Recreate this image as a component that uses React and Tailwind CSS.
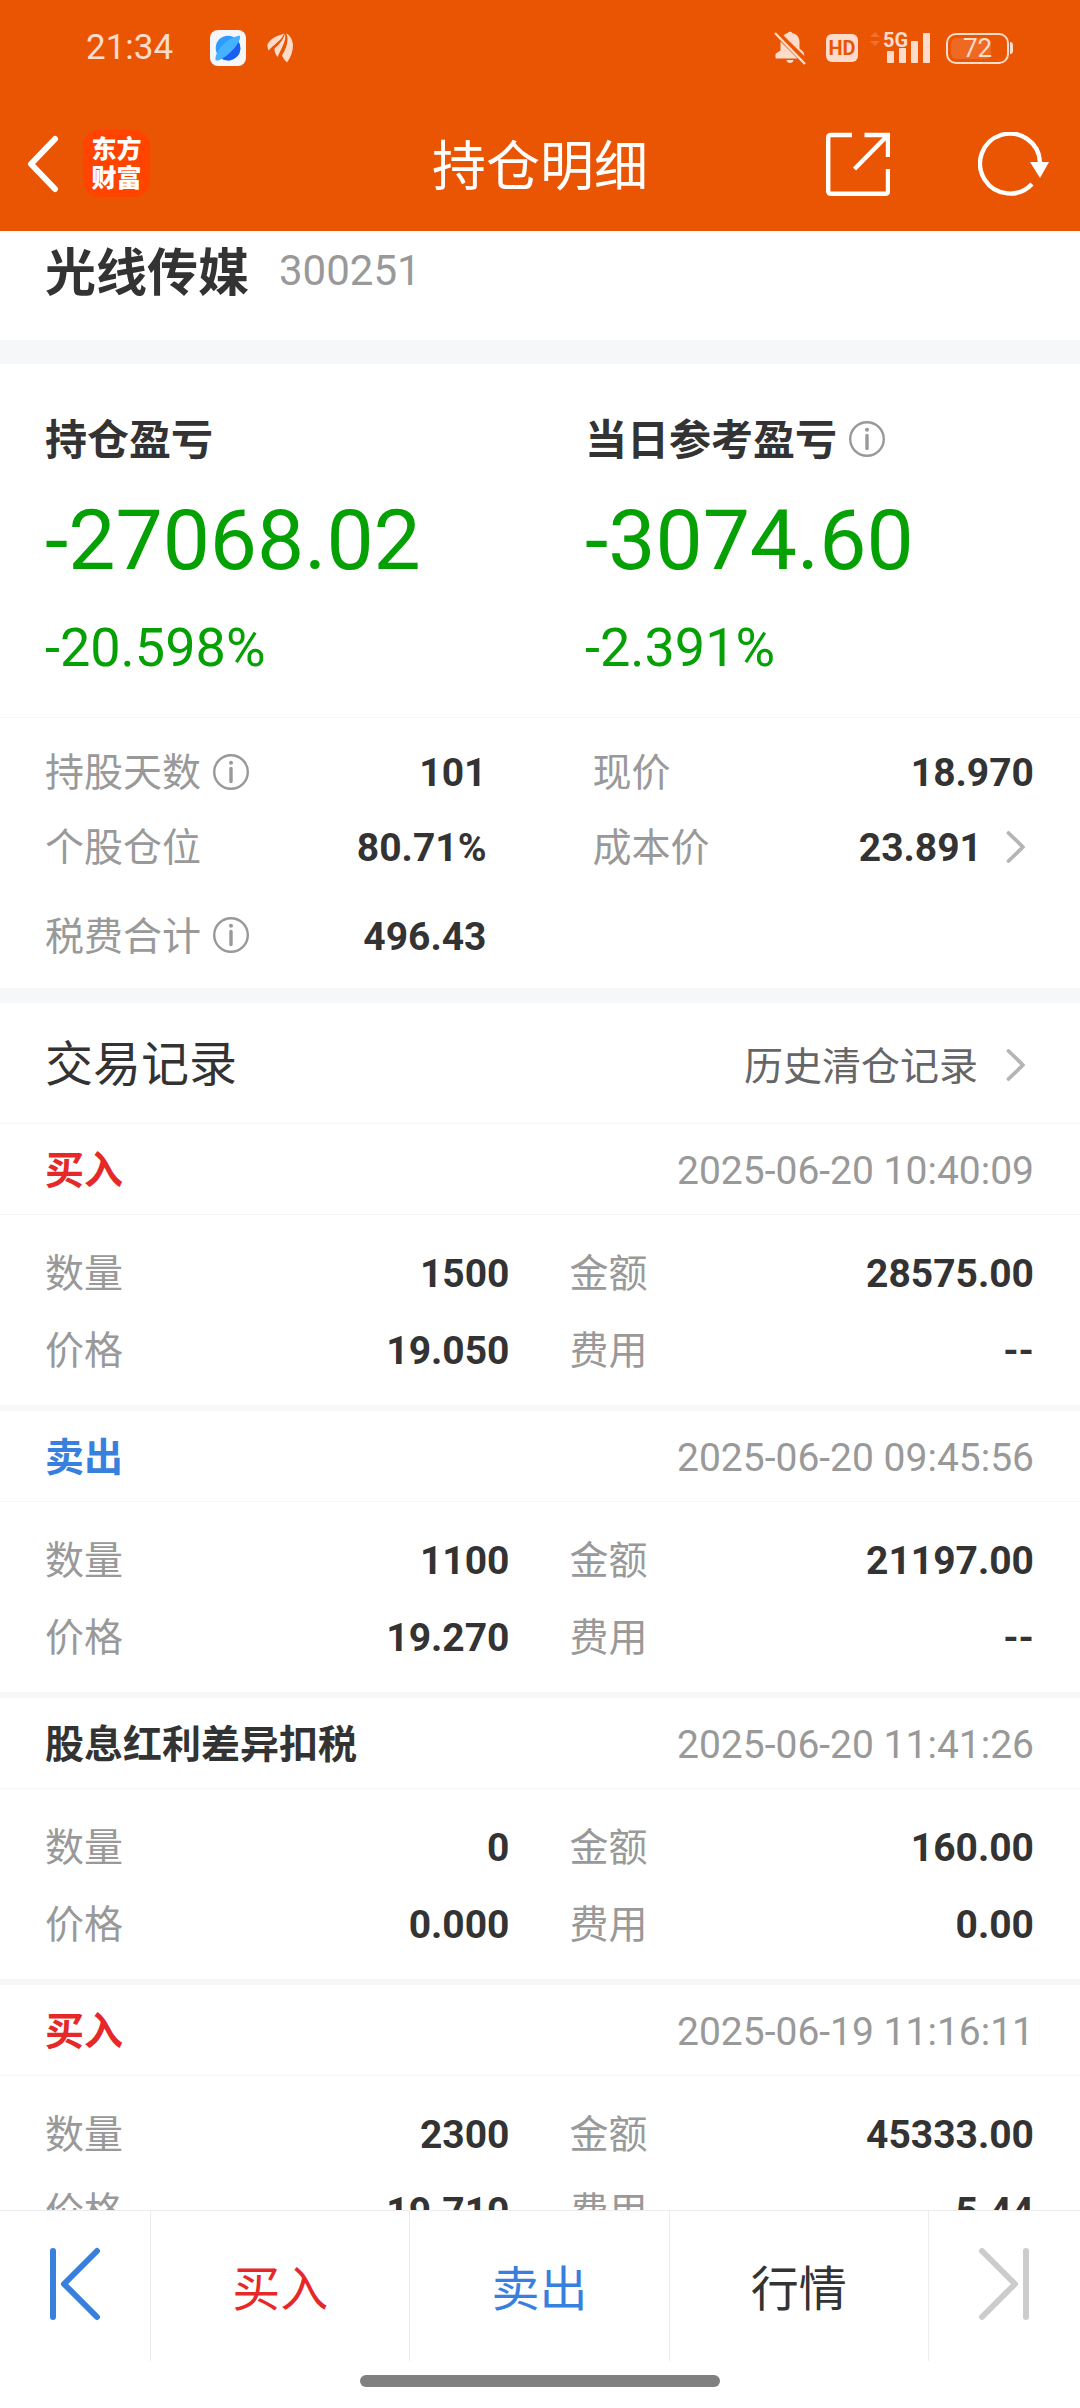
import React from "react";

const stats = {
  left: [
    { label: "持股天数", value: "101", info: true },
    { label: "个股仓位", value: "80.71%" },
    { label: "税费合计", value: "496.43", info: true },
  ],
  right: [
    { label: "现价", value: "18.970" },
    { label: "成本价", value: "23.891", link: true },
  ],
};

const records = [
  { type: "买入", color: "text-[#e62828]", time: "2025-06-20 10:40:09", count: "1500", amount: "28575.00", price: "19.050", fee: "--" },
  { type: "卖出", color: "text-[#3880de]", time: "2025-06-20 09:45:56", count: "1100", amount: "21197.00", price: "19.270", fee: "--" },
  { type: "股息红利差异扣税", color: "text-[#333333]", time: "2025-06-20 11:41:26", count: "0", amount: "160.00", price: "0.000", fee: "0.00" },
  { type: "买入", color: "text-[#e62828]", time: "2025-06-19 11:16:11", count: "2300", amount: "45333.00", price: "19.710", fee: "5.44" },
];

const InfoIcon = () => (
  <svg className="mb-1 h-9 w-9" viewBox="0 0 36 36" fill="none" stroke="#999999">
    <circle cx="18" cy="18" r="16.8" strokeWidth="2.4" />
    <circle cx="18" cy="8.8" r="2" fill="#999999" stroke="none" />
    <path d="M18 14.5v13" strokeWidth="3.4" strokeLinecap="round" />
  </svg>
);

const ChevronIcon = () => (
  <svg className="mb-1 h-8 w-5" viewBox="0 0 20 32" fill="none" stroke="#b5b5b5" strokeWidth="3.8" strokeLinecap="round" strokeLinejoin="round">
    <path d="M2.5 2L17 16L2.5 30" />
  </svg>
);

const StatusBar = () => (
  <div className="flex h-24 items-center justify-between pl-[86px] pr-[67px] text-[#fddccb]">
    <div className="flex items-center">
      <span className="w-[86px] text-[35px] leading-9">21:34</span>
      <svg className="ml-[38px] h-9 w-9" viewBox="0 0 36 36">
        <rect width="36" height="36" rx="8" fill="#f5f6f8" />
        <circle cx="18" cy="18" r="12.3" fill="#2f9bff" />
        <path d="M28.5 11.5A12.3 12.3 0 0 1 11.5 28.5C18 25 25 18.5 28.5 11.5Z" fill="#1c5ff0" />
        <path d="M6 30.5C4.5 29 6 25 8 21C12 14 20 7.5 29.5 5.5C31.5 8 28 14 23 19.5C17 26 9 31.5 6 30.5Z" fill="#46b2ff" />
      </svg>
      <svg className="ml-[21px] h-[30px] w-[27px]" viewBox="0 0 27 30" fill="#fddccb">
        <path d="M0.5 11C5 4 11 3 17 0.5C15 7 8 10.5 1.5 17.5C0.5 15 0.3 13 0.5 11Z" />
        <path d="M18 0.5C19.5 8 15 14 10.5 24C8.5 21.5 7.5 19 7.5 15.5C12 11.5 16.500 7 18 0.5Z" />
        <path d="M19.5 0.5C28.500 6 27.500 19 20 29.5C18 27.5 16 25 15 22.5C19.500 15 22 8 19.5 0.5Z" />
      </svg>
    </div>
    <div className="flex items-center">
      <svg className="h-[34px] w-8" viewBox="0 0 32 34" fill="#fddccb">
        <path d="M9.500 4.500C11 3 12.500 2.300 14 2V1.500C14.500 0.500 17.500 0.500 18 1.500V2C23 3 25.500 6.500 25.500 11V17.500L29 20.500Q30.500 22 30.300 25Z" />
        <path d="M6.500 10.500L23.500 27.500H3C1.800 27.500 1.500 27 1.500 26V23.500Q1.500 22 3.500 21.500L6.500 19.500Z" />
        <path d="M12.500 29H19.500C19 31.300 18 32 16 32S13 31.300 12.500 29Z" />
        <path d="M1 2L31 33" stroke="#fddccb" strokeWidth="2.4" />
      </svg>
      <span className="ml-5 flex h-7 w-8 items-center justify-center rounded-md bg-[#fddccb] text-[20px] leading-7 font-bold text-[#ea5504]">HD</span>
      <svg className="ml-3 h-8 w-[60px] overflow-visible" viewBox="0 0 60 32" fill="#fddccb">
        <path d="M0 5L5 0L10 5ZM0 9L5 14L10 9Z" fill="#f07030" />
        <text x="13" y="15" fontFamily="Roboto" fontSize="20" fontWeight="700">5G</text>
        <rect x="17" y="19" width="7" height="12" rx="1" />
        <rect x="29" y="16" width="7" height="15" rx="1" />
        <rect x="41" y="9" width="7" height="22" rx="1" />
        <rect x="53" y="1" width="7" height="30" rx="1" />
      </svg>
      <div className="ml-4 flex items-center gap-px">
        <span className="relative flex h-[31px] w-[63px] items-center justify-center rounded-[10px] border-2 border-[#fddccb] text-[26px] leading-6">
          <span className="absolute inset-y-[3px] left-[3px] w-[40px] rounded-md bg-[#ee6a22]" />
          <span className="relative">72</span>
        </span>
        <span className="h-3 w-[3px] rounded-r-sm bg-[#fddccb]" />
      </div>
    </div>
  </div>
);

const Header = () => (
  <header className="shrink-0 bg-[#ea5504] text-white">
    <StatusBar />
    <div className="grid h-[135px] grid-cols-[1fr_auto_1fr] items-center">
      <div className="flex items-center pl-[26px]">
        <button type="button" aria-label="返回">
          <svg className="h-[58px] w-[34px]" viewBox="0 0 34 58" fill="none" stroke="currentColor" strokeWidth="6" strokeLinecap="round" strokeLinejoin="round">
            <path d="M29 4L5 29L29 54" />
          </svg>
        </button>
        <span className="ml-[23px] flex h-[67px] w-[67px] flex-col items-center justify-center rounded-2xl bg-[#ff4400] text-[25px] leading-[29px] font-black">
          <span>东方</span>
          <span>财富</span>
        </span>
      </div>
      <h1 className="pt-2 text-[54px] leading-[60px]">持仓明细</h1>
      <div className="flex items-center justify-end gap-[88px] pr-[30px]">
        <button type="button" aria-label="分享">
          <svg className="h-16 w-16" viewBox="0 0 64 64" fill="none" stroke="currentColor" strokeWidth="4.4">
            <path d="M26 3H5Q2.2 3 2.2 5.5V59Q2.2 61.8 5 61.8H59.5Q62 61.8 62 59V37M38.5 3H62V25M61 4L28.5 37" />
          </svg>
        </button>
        <button type="button" aria-label="刷新">
          <svg className="h-16 w-[72px]" viewBox="0 0 72 64" fill="none" stroke="currentColor" strokeWidth="4.4">
            <path d="M54 52A30 30 0 1 1 62 30" />
            <path d="M52 30H71L62 46Z" fill="currentColor" stroke="none" />
          </svg>
        </button>
      </div>
    </div>
  </header>
);

const Profit = ({ title, value, percent, info }) => (
  <div className="w-1/2 pl-[45px]">
    <h2 className="flex items-center gap-3 text-[42px] leading-[60px] font-bold text-[#333333]">
      {title}
      {info && <InfoIcon />}
    </h2>
    <p className="mt-[18px] text-[84px] leading-[104px]">{value}</p>
    <p className="mt-5 text-[54px] leading-[70px]">{percent}</p>
  </div>
);

const StatRow = ({ label, value, info, link }) => (
  <div className="flex h-[75px] items-center last:nth-[3]:h-[102px]">
    <dt className="flex items-center gap-3 text-[#999999]">
      {label}
      {info && <InfoIcon />}
    </dt>
    <dd className="ml-auto flex items-center gap-6 font-bold">
      {value}
      {link && (
        <button type="button" aria-label="成本价详情" className="pr-2">
          <ChevronIcon />
        </button>
      )}
    </dd>
  </div>
);

const Field = ({ label, value }) => (
  <div className="flex items-center justify-between">
    <dt className="text-[#999999]">{label}</dt>
    <dd className="font-bold">{value}</dd>
  </div>
);

const RecordItem = ({ record }) => (
  <li className="border-b-[6px] border-[#f6f7f9]">
    <div className="flex h-[91px] items-center justify-between border-b border-[#f6f6f6] pt-1 pr-[46px] pl-[45px]">
      <h3 className={`font-bold ${record.color}`}>{record.type}</h3>
      <time className="text-[#999999]">{record.time}</time>
    </div>
    <dl className="grid grid-cols-2 gap-x-[60px] pt-[21px] pr-[46px] pb-[15px] pl-[45px] leading-[77px]">
      <Field label="数量" value={record.count} />
      <Field label="金额" value={record.amount} />
      <Field label="价格" value={record.price} />
      <Field label="费用" value={record.fee} />
    </dl>
  </li>
);

const BottomBar = () => (
  <footer className="shrink-0 border-t border-[#ececec] bg-white">
    <nav className="flex h-[150px] divide-x divide-[#ececec] text-[48px]">
      <button type="button" aria-label="上一只" className="flex w-[151px] items-center justify-center pb-1">
        <svg className="h-[74px] w-[52px]" viewBox="0 0 52 74" fill="none" stroke="#3880de" strokeWidth="6" strokeLinecap="round" strokeLinejoin="round">
          <path d="M4 4V70M48 4L15 37L48 70" />
        </svg>
      </button>
      <button type="button" className="flex-1 pt-2 text-[#e62828]">买入</button>
      <button type="button" className="flex-1 pt-2 text-[#3880de]">卖出</button>
      <button type="button" className="flex-1 pt-2">行情</button>
      <button type="button" aria-label="下一只" className="flex w-[151px] items-center justify-center pb-1" disabled>
        <svg className="h-[74px] w-[52px]" viewBox="0 0 52 74" fill="none" stroke="#cccccc" strokeWidth="6" strokeLinecap="round" strokeLinejoin="round">
          <path d="M48 4V70M4 4L37 37L4 70" />
        </svg>
      </button>
    </nav>
    <div className="flex h-[47px] justify-center pt-[14px]">
      <span className="h-3 w-1/3 rounded-full bg-[#808080]" />
    </div>
  </footer>
);

const App = () => {
  return (
    <div className="flex h-screen flex-col bg-white font-['Roboto','Noto_Sans_CJK_SC',sans-serif] text-[39px] text-[#333333]">
      <Header />

      <main className="min-h-0 flex-1 overflow-y-auto [scrollbar-width:none]">
        <section className="flex items-center gap-[30px] border-b-[24px] border-[#f6f7f9] pt-[5px] pb-[34px] pl-[45px]">
          <h2 className="pt-1.5 text-[51px] leading-[64px] font-bold">光线传媒</h2>
          <span className="text-[42px] leading-[64px] text-[#999999]">300251</span>
        </section>

        <section className="flex border-b border-[#f6f6f6] pt-[47px] pb-[34px] text-[#04a004]">
          <Profit title="持仓盈亏" value="-27068.02" percent="-20.598%" />
          <Profit title="当日参考盈亏" value="-3074.60" percent="-2.391%" info />
        </section>

        <section className="grid grid-cols-2 gap-x-[106px] border-b-[15px] border-[#f6f7f9] pt-[18px] pr-[46px] pl-[45px]">
          <dl>
            {stats.left.map((item) => (
              <StatRow key={item.label} {...item} />
            ))}
          </dl>
          <dl>
            {stats.right.map((item) => (
              <StatRow key={item.label} {...item} />
            ))}
          </dl>
        </section>

        <section>
          <div className="flex h-[121px] items-center justify-between border-b border-[#f6f6f6] pt-1 pr-[46px] pl-[45px]">
            <h2 className="text-[48px]">交易记录</h2>
            <a href="#history" className="flex items-center gap-7 pt-1 pr-2 text-[#666666]">
              历史清仓记录
              <ChevronIcon />
            </a>
          </div>
          <ul>
            {records.map((record) => (
              <RecordItem key={record.time} record={record} />
            ))}
          </ul>
        </section>
      </main>

      <BottomBar />
    </div>
  );
};

export default App;
